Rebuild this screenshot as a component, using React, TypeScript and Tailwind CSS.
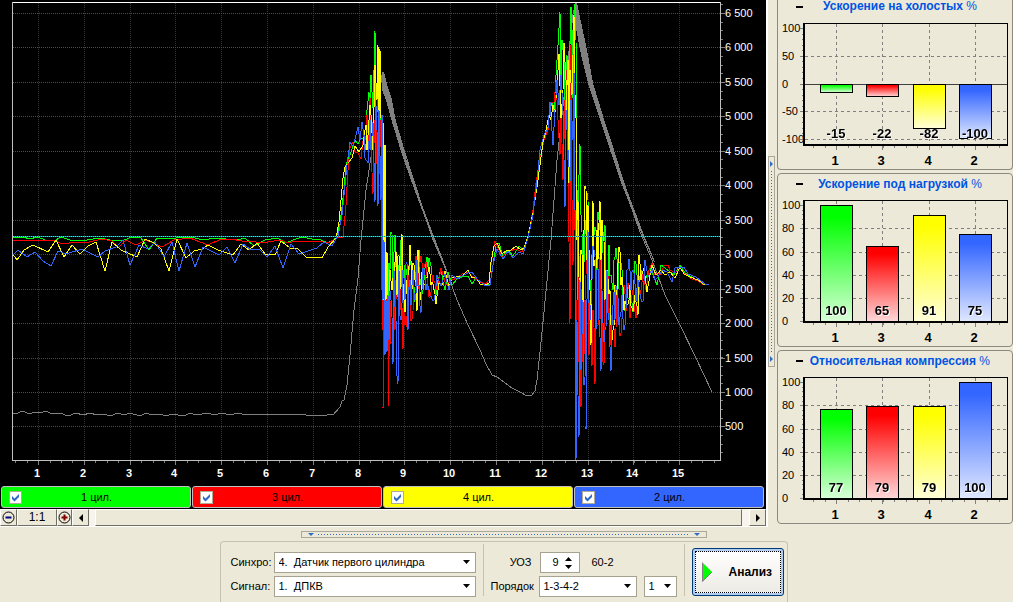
import React, { useState } from 'react';

type Series = { name: string; color: string; points: string };

const BLUE = '#3366ff';

const SERIES: Series[] = [
  {
    name: '1 цил.',
    color: '#00ff00',
    points:
      '12,237 24,237 29,239 38,237 45,240 54,241 61,237 70,240 87,240 99,238 110,240 124,240 132,237 141,238 149,250 157,238 176,238 190,237 204,240 215,238 237,240 245,238 254,246 265,240 277,238 286,243 293,240 302,237 312,239 321,240 328,243 336,238 340,224 344,190 346,165 350,155 355,140 358,144 361,138 364,138 366,150 367,110 369,92 370,140 371,75 373,108 374,70 375,31 376,120 378,100 380,80 381,140 382,160 383,230 384,290 386,300 387,270 388,308 390,270 391,232 393,290 394,252 395,235 397,290 399,265 401,240 403,295 405,265 408,300 411,265 414,302 416,265 419,250 421,285 423,290 426,262 428,267 430,262 433,285 436,295 438,280 441,268 443,282 445,290 448,272 452,285 457,279 462,277 468,276 472,284 476,278 480,282 486,285 490,284 493,265 496,246 499,243 503,256 508,250 513,256 519,246 523,250 528,237 533,213 537,185 540,160 544,138 548,127 550,110 552,102 554,112 556,75 558,45 560,12 561,90 562,40 564,60 565,120 567,55 568,100 570,45 571,7 572,100 573,30 574,180 575,4 576,40 577,190 578,300 580,144 581,215 583,300 585,220 587,193 588,200 590,280 592,255 594,235 597,270 599,220 601,290 603,232 605,225 607,290 609,245 611,275 613,290 615,257 618,290 620,262 622,270 624,305 627,285 630,295 633,312 635,261 638,290 641,270 645,280 650,268 653,275 657,285 661,265 665,268 670,272 674,275 680,265 685,273 692,277 698,281 705,285',
  },
  {
    name: '3 цил.',
    color: '#ff0000',
    points:
      '12,240 33,241 48,240 56,241 62,244 76,242 89,242 102,239 112,241 118,248 126,240 136,245 146,240 153,243 162,247 174,240 190,238 200,242 208,245 219,240 231,239 242,241 256,242 268,242 280,240 288,243 296,241 318,241 328,243 337,238 343,237 346,205 348,170 350,148 353,142 355,152 358,153 361,159 364,132 366,140 367,115 369,150 370,97 371,150 373,194 374,120 376,165 377,110 378,97 379,175 381,120 382,290 383,330 383,408 384,300 386,290 387,350 388,300 388,406 390,300 392,342 394,285 395,330 396,280 398,300 399,270 401,310 403,349 404,290 405,325 407,327 408,265 410,290 412,319 414,270 416,256 418,290 420,262 423,280 426,262 429,297 433,275 437,290 441,268 446,285 452,280 457,278 462,274 468,272 474,278 480,282 486,284 489,280 492,258 495,241 499,250 502,257 509,251 516,249 522,252 528,238 533,210 536,183 540,160 544,140 548,130 550,103 554,102 556,82 557,100 558,120 560,155 561,105 563,180 565,100 567,70 568,160 570,323 571,45 572,200 573,265 574,80 575,230 576,300 578,363 579,255 580,300 581,407 582,290 584,355 585,300 587,240 589,355 590,300 592,366 593,310 595,384 596,300 598,325 600,257 602,320 604,365 605,300 607,275 609,320 611,345 613,320 615,347 617,290 619,320 622,318 624,285 626,312 628,283 630,318 633,290 636,318 638,280 640,295 643,274 646,290 649,270 652,263 655,275 658,273 661,275 664,265 668,265 670,270 675,273 680,268 685,274 692,279 698,281 704,285 709,284',
  },
  {
    name: '4 цил.',
    color: '#ffff00',
    points:
      '12,253 17,260 24,250 33,245 48,252 56,240 64,257 72,245 80,254 88,246 96,242 105,271 112,242 121,250 137,257 145,239 154,243 161,249 169,271 177,239 186,258 194,251 202,249 208,245 218,250 233,255 241,244 249,250 257,243 265,254 275,255 281,241 290,248 298,249 306,257 322,258 328,247 336,238 339,222 343,178 345,167 352,158 355,146 359,152 363,145 365,130 366,125 367,150 370,105 371,115 373,150 375,65 377,100 378,45 379,120 380,49 381,118 382,160 383,123 384,300 385,145 386,300 387,252 389,309 390,270 392,290 394,300 395,262 397,295 399,255 400,290 402,234 404,300 406,280 408,275 410,245 412,290 414,265 415,280 417,311 418,250 420,300 422,272 426,277 429,267 431,285 434,290 436,304 439,283 442,285 445,271 449,287 452,278 456,277 462,276 468,270 472,278 476,277 480,284 486,285 489,283 491,262 494,246 497,243 502,254 507,250 511,250 516,246 521,250 524,248 528,236 533,213 537,187 540,165 543,142 546,130 549,115 551,120 553,105 555,112 558,70 559,54 561,118 563,90 564,43 566,80 566,112 568,60 569,183 570,70 572,95 574,15 575,95 576,118 576,240 578,200 580,340 581,250 583,325 584,230 585,186 587,260 588,205 590,290 591,345 592,280 593,201 595,260 597,230 598,260 600,201 601,260 603,237 605,300 607,270 610,290 613,330 615,285 617,290 619,247 621,285 624,310 627,305 630,285 632,308 635,295 638,315 639,255 641,280 644,268 647,292 650,275 652,265 656,275 661,270 665,275 670,272 675,278 680,267 684,274 690,277 698,280 705,285',
  },
  {
    name: '2 цил.',
    color: BLUE,
    points:
      '12,256 18,250 27,257 35,252 43,261 51,266 58,251 66,254 82,249 98,257 105,251 116,247 123,240 130,265 139,245 148,249 155,242 164,257 172,242 179,271 187,243 195,267 203,247 219,255 227,247 235,263 243,244 251,250 259,249 267,257 275,246 283,268 291,244 299,254 317,248 324,242 332,246 338,236 342,215 345,185 347,165 350,142 353,146 356,135 358,127 360,140 362,122 364,135 365,158 368,163 370,120 371,150 373,122 375,202 376,106 377,130 378,206 379,110 381,200 382,115 383,300 384,240 385,355 386,300 387,352 388,295 389,340 391,300 393,364 394,270 396,320 398,384 399,270 401,320 403,270 405,300 407,262 408,330 410,280 411,305 413,270 415,300 417,260 419,285 421,313 423,268 426,290 430,296 434,300 437,275 441,286 445,274 449,290 452,275 457,279 462,276 468,273 472,272 477,279 482,283 486,286 490,285 493,265 497,249 500,254 503,259 508,251 513,258 519,252 523,254 528,238 533,215 537,180 540,150 544,135 548,128 550,102 553,145 555,110 557,80 559,105 561,75 563,110 565,207 566,110 568,150 570,183 571,100 573,140 574,73 575,210 576,460 577,320 578,395 579,437 580,280 581,370 583,300 584,385 586,300 586,429 587,300 588,230 590,320 592,280 594,250 596,330 597,270 599,320 601,371 602,290 605,330 607,270 609,320 611,371 613,305 615,320 617,290 619,325 622,295 625,325 627,270 629,259 631,290 633,270 636,301 638,280 641,299 643,301 645,260 648,277 652,269 655,280 658,277 662,270 667,272 672,282 675,268 680,267 684,267 688,274 696,277 701,281 705,284 709,284',
  },
];

const DENSE_ZONES = [
  { from: 385, to: 440, amp: 34 },
  { from: 577, to: 645, amp: 48 },
];

/* Adds the fast ripple that follows each throttle release, fading towards the end of the zone. */
function withRipple(points: string, seed: number): string {
  const pts = points.split(' ').map((p) => p.split(',').map(Number));
  const out: string[] = [];
  pts.forEach(([x, y], i) => {
    out.push(`${x},${y}`);
    const next = pts[i + 1];
    const zone = DENSE_ZONES.find((z) => x >= z.from && x < z.to);
    if (!next || !zone) return;
    for (let xi = x + 1; xi < next[0]; xi += 1) {
      const fade = 1 - (xi - zone.from) / (zone.to - zone.from);
      const base = y + ((next[1] - y) * (xi - x)) / (next[0] - x);
      out.push(`${xi},${Math.round(base + Math.sin(xi * 12.9 + seed * 2.3) * zone.amp * fade)}`);
    }
  });
  return out.join(' ');
}

const TRACES = SERIES.map((s, i) => ({ ...s, points: withRipple(s.points, i) }));

const RPM_LINE =
  '12,413 18,413 22,411 30,414 34,412 40,413 46,411 52,414 60,413 68,416 76,413 83,415 90,413 97,415 104,414 110,416 118,413 124,415 130,413 140,416 146,413 152,415 160,414 166,416 172,414 184,416 190,413 196,415 208,413 214,415 222,413 230,415 238,413 246,415 262,414 276,415 290,414 306,415 320,415 327,415 330,414 333,415 340,407 342,401 344,400 347,385 350,355 354,310 358,278 361,240 366,190 372,150 376,120 379,95 382,75 404,150 432,237 446,270 457,300 468,325 480,350 486,364 492,375 497,377 504,382 512,388 520,392 527,396 532,395 535,391 537,380 540,352 544,312 551,240 557,160 562,115 568,60 573,14 576,3 591,84 611,150 640,232 652,260 665,295 680,325 696,358 712,392';

const X_GRID = [38, 84, 130, 175, 221, 267, 313, 359, 404, 450, 496, 542, 588, 633, 679];
const Y_GRID = [13, 47, 82, 116, 151, 185, 220, 254, 289, 323, 358, 392, 426];
const Y_LABELS = ['6 500', '6 000', '5 500', '5 000', '4 500', '4 000', '3 500', '3 000', '2 500', '2 000', '1 500', '1 000', '500'];
const X_MINOR = Array.from({ length: 62 }, (_, i) => Math.round(15.2 + i * 11.45)).filter((x) => x < 720);
const Y_MINOR = Array.from({ length: 53 }, (_, i) => Math.round(4.4 + i * 8.61)).filter((y) => y < 460);
const LEVEL_DOTS = Array.from({ length: 354 }, (_, i) => `M${13 + i * 2} 236h1v1h-1z`).join('');

function Oscillogram({ visible }: { visible: Record<string, boolean> }) {
  return (
    <svg viewBox="0 0 766 485" className="block h-auto w-full" role="img" aria-label="График оборотов">
      <g shapeRendering="crispEdges" fill="none" strokeWidth="1">
        {X_GRID.map((x) => (
          <line key={x} x1={x + 0.5} x2={x + 0.5} y1="3" y2="460" stroke="#343434" strokeDasharray="1 1" />
        ))}
        {Y_GRID.map((y) => (
          <line key={y} x1="13" x2="720" y1={y + 0.5} y2={y + 0.5} stroke="#4c4c4c" strokeDasharray="1 1" />
        ))}
        <polyline points={RPM_LINE} stroke="#808080" />
        <polygon points="382,72 384,72 387,84 392,100 396,122 406,158 418,194 433,234 447,270 446,270 431,234 416,194 403,158 392,122 386,100 382,90" fill="#808080" />
        <polygon points="575,3 577,3 581,22 587,50 593,83 603,116 614,150 625,185 642,230 655,262 654,262 640,230 622,185 610,150 599,116 588,83 581,55 576,28" fill="#808080" />
        {TRACES.filter((s) => visible[s.name]).map((s) => (
          <polyline key={s.name} points={s.points} stroke={s.color} />
        ))}
        <path d="M13 236h707v1h-707z" fill="#008080" />
        <path d={LEVEL_DOTS} fill="#00ffff" />
        <line x1="12" x2="721" y1="2.5" y2="2.5" stroke="#ffffff" />
        <line x1="12.5" x2="12.5" y1="2" y2="461" stroke="#c0c0c0" />
        <line x1="12" x2="721" y1="460.5" y2="460.5" stroke="#c0c0c0" />
        <line x1="720.5" x2="720.5" y1="2" y2="461" stroke="#c0c0c0" />
        {X_MINOR.map((x) => (
          <line key={x} x1={x + 0.5} x2={x + 0.5} y1="461" y2="463" stroke="#808080" />
        ))}
        {X_GRID.map((x) => (
          <line key={x} x1={x + 0.5} x2={x + 0.5} y1="461" y2="465" stroke="#808080" />
        ))}
        {Y_MINOR.map((y) => (
          <line key={y} x1="721" x2="723" y1={y + 0.5} y2={y + 0.5} stroke="#808080" />
        ))}
        {Y_GRID.map((y) => (
          <line key={y} x1="721" x2="725" y1={y + 0.5} y2={y + 0.5} stroke="#808080" />
        ))}
      </g>
      <g fill="#ffffff" fontSize="11">
        {Y_GRID.map((y, i) => (
          <text key={y} x="725" y={y + 4}>
            {Y_LABELS[i]}
          </text>
        ))}
      </g>
      <g fill="#ffffff" fontSize="11" fontWeight="bold" textAnchor="middle">
        {X_GRID.map((x, i) => (
          <text key={x} x={x - 1} y="477">
            {i + 1}
          </text>
        ))}
      </g>
    </svg>
  );
}

const CHANNELS = [
  { name: '1 цил.', cls: 'bg-[#00ff00]' },
  { name: '3 цил.', cls: 'bg-[#ff0000]' },
  { name: '4 цил.', cls: 'bg-[#ffff00]' },
  { name: '2 цил.', cls: 'bg-[#3366ff]' },
];

function ChannelBar({ visible, onToggle }: { visible: Record<string, boolean>; onToggle: (name: string) => void }) {
  return (
    <div className="grid h-6 grid-cols-4 gap-px py-px pr-0.5 pl-px">
      {CHANNELS.map((c) => (
        <label key={c.name} className={`flex items-center rounded-[3px] border border-[#c0c0c0] px-[7px] ${c.cls}`}>
          <span className="relative block size-[13px] bg-white">
            <input
              type="checkbox"
              checked={visible[c.name]}
              onChange={() => onToggle(c.name)}
              className="peer block size-[13px] appearance-none border border-[#b0ac98]"
            />
            <svg viewBox="0 0 13 13" className="pointer-events-none absolute inset-0 hidden size-[13px] peer-checked:block">
              <path d="M3 5v3l2.500 2.500L10 6V3L5.500 7.500z" fill="#316ac5" />
            </svg>
          </span>
          <span className="flex-1 pr-3 text-center">{c.name}</span>
        </label>
      ))}
    </div>
  );
}

const RAISED = 'flex h-[17px] items-center justify-center border-t border-l border-r border-b border-t-white border-l-white border-r-[#716f64] border-b-[#716f64] bg-[#ece9d8]';

function ScrollRow() {
  return (
    <div className="flex h-[18px] border-b border-white bg-[#f6f4ec]">
      <button type="button" aria-label="Уменьшить" className={`${RAISED} w-[17px]`}>
        <svg viewBox="0 0 13 13" className="size-[13px]">
          <circle cx="6.500" cy="6.500" r="5.500" fill="none" stroke="#000" />
          <path d="M3.500 5.500h6v2h-6z" fill="#000080" />
        </svg>
      </button>
      <button type="button" className={`${RAISED} w-10 text-[12px]`}>
        1:1
      </button>
      <button type="button" aria-label="Увеличить" className={`${RAISED} w-[15px]`}>
        <svg viewBox="0 0 13 13" className="size-[13px] shrink-0">
          <circle cx="6.500" cy="6.500" r="5.500" fill="none" stroke="#000" />
          <path d="M3.500 5.500h2v-2h2v2h2v2h-2v2h-2v-2h-2z" fill="#800000" />
        </svg>
      </button>
      <button type="button" aria-label="Влево" className={`${RAISED} w-[17px]`}>
        <svg viewBox="0 0 4 8" className="h-2 w-1">
          <path d="M4 0v8L0 4z" fill="#000" />
        </svg>
      </button>
      <div className="flex flex-1 pr-[7px] pl-1.5">
        <div className={`${RAISED} flex-1`} />
      </div>
      <button type="button" aria-label="Вправо" className={`${RAISED} w-[17px]`}>
        <svg viewBox="0 0 4 8" className="h-2 w-1">
          <path d="M0 0v8l4-4z" fill="#000" />
        </svg>
      </button>
    </div>
  );
}

type Bar = { label: string; value: number; top: string; bottom: string };

const BAR_STYLE = [
  { label: '1', top: '#00ff00', bottom: '#d8ffd8' },
  { label: '3', top: '#ff0000', bottom: '#ffd8d8' },
  { label: '4', top: '#ffff00', bottom: '#ffffd8' },
  { label: '2', top: '#3366ff', bottom: '#e0e8ff' },
];
const CENTERS = [58, 104, 151, 197];

function BarPanel({ id, title, values, ticks, zero, scale, minor, first }: {
  id: string;
  title: string;
  values: number[];
  ticks: [number, number][];
  zero: number;
  scale: number;
  minor: number;
  first?: boolean;
}) {
  const bars: Bar[] = BAR_STYLE.map((b, i) => ({ ...b, value: values[i] }));
  const minorTicks = Array.from({ length: 60 }, (_, i) => Math.round(11 + i * minor)).filter((y) => y < 128);
  return (
    <section
      className={`border border-[#8c8a80] bg-[#ece9d8] ${first ? 'rounded-b-[4px] border-t-0' : 'rounded-[4px]'}`}
    >
      <header className={`flex items-center text-[12px] leading-[13px] font-bold ${first ? 'h-[17px] pb-1' : 'h-5'}`}>
        <button type="button" aria-label="Свернуть" className="flex h-3 w-8 items-center justify-end pr-[7px]">
          <span className="h-[2px] w-[7px] bg-black" />
        </button>
        <h2 className="flex-1 pr-[22px] text-center whitespace-nowrap text-[#0054e3]">
          {title} <span className="font-normal">%</span>
        </h2>
      </header>
      <svg viewBox="0 0 234 152" className="block h-auto w-full" role="img" aria-label={title}>
        <defs>
          {bars.map((b) => (
            <linearGradient key={b.label} id={`${id}-${b.label}`} x1="0" x2="0" y1="0" y2="1">
              <stop offset="0" stopColor={b.top} />
              <stop offset="0.100" stopColor={b.top} />
              <stop offset="1" stopColor={b.bottom} />
            </linearGradient>
          ))}
        </defs>
        <g fontSize="11" fill="#000">
          {ticks.map(([v, y]) => (
            <text key={v} x="4" y={y + 4}>
              {v}
            </text>
          ))}
        </g>
        <g shapeRendering="crispEdges" fill="none">
          {ticks.map(([v, y]) => (
            <React.Fragment key={v}>
              <line x1="22" x2="26" y1={y + 0.5} y2={y + 0.5} stroke="#808080" />
              {v !== 0 && v !== 100 && (
                <line x1="27" x2="229" y1={y + 0.5} y2={y + 0.5} stroke="#808080" strokeDasharray="3 3" />
              )}
            </React.Fragment>
          ))}
          {minorTicks.map((y) => (
            <line key={y} x1="24" x2="26" y1={y + 0.5} y2={y + 0.5} stroke="#808080" />
          ))}
          {CENTERS.map((x) => (
            <line key={x} x1={x + 0.5} x2={x + 0.5} y1="7" y2="128" stroke="#808080" strokeDasharray="3 3" />
          ))}
          {Array.from({ length: 17 }, (_, i) => Math.round(35 + i * 11.6)).map((x) => (
            <line key={x} x1={x + 0.5} x2={x + 0.5} y1="129" y2="131" stroke="#808080" />
          ))}
          {CENTERS.map((x) => (
            <line key={x} x1={x + 0.5} x2={x + 0.5} y1="129" y2="133" stroke="#808080" />
          ))}
          <line x1="27" x2="229" y1={zero + 0.5} y2={zero + 0.5} stroke="#404040" />
          {bars.map((b, i) => {
            const edge = Math.round(zero - b.value * scale);
            return (
              <rect
                key={b.label}
                x={CENTERS[i] - 15.5}
                y={Math.min(edge, zero) + 0.5}
                width="32"
                height={Math.abs(edge - zero)}
                fill={`url(#${id}-${b.label})`}
                stroke="#000"
              />
            );
          })}
          <path d="M26 6.500h204M229.500 6v122" stroke="#000" />
          <path d="M26 6v122M25 128h205" stroke="#000" strokeWidth="2" />
        </g>
        <g fontSize="13" fontWeight="bold" textAnchor="middle" fill="#000">
          {bars.map((b, i) => (
            <text key={b.label} x={CENTERS[i]} y="121" className="drop-shadow-[1px_1px_0_#ffffff]">
              {b.value}
            </text>
          ))}
          {bars.map((b, i) => (
            <text key={b.label} x={CENTERS[i] - 1} y="148">
              {b.label}
            </text>
          ))}
        </g>
      </svg>
    </section>
  );
}

const PERCENT_TICKS: [number, number][] = [[100, 11], [80, 34], [60, 58], [40, 81], [20, 104], [0, 127]];
const SIGNED_TICKS: [number, number][] = [[100, 11], [50, 39], [0, 67], [-50, 94], [-100, 122]];

function Picker({ label, options, className }: { label: string; options: string[]; className: string }) {
  return (
    <span className={`relative block ${className}`}>
      <select
        aria-label={label}
        className="block h-[21px] w-full appearance-none border border-[#a5a290] bg-white pl-1 text-[11px] outline-none"
      >
        {options.map((o) => (
          <option key={o}>{o}</option>
        ))}
      </select>
      <svg viewBox="0 0 7 4" className="pointer-events-none absolute top-2 right-1.5 h-1 w-[7px]">
        <path d="M0 0h7L3.500 4z" fill="#000" />
      </svg>
    </span>
  );
}

function Toolbar() {
  const [angle, setAngle] = useState(9);
  return (
    <form
      className="mx-auto flex w-[568px] flex-1 gap-[7px] rounded-t-[4px] border border-b-0 border-[#c5c2b0] pt-0.5 pl-2.5"
      onSubmit={(e) => e.preventDefault()}
    >
      <div className="grid grid-cols-[43px_202px] content-start items-center gap-y-[3px] pt-2">
        <span>Синхро:</span>
        <Picker label="Синхро" options={['4.\u00a0\u00a0Датчик первого цилиндра']} className="w-full" />
        <span>Сигнал:</span>
        <Picker label="Сигнал" options={['1.\u00a0\u00a0ДПКВ']} className="w-full" />
      </div>
      <div className="h-[52px] w-px bg-[#c5c2b0]" />
      <div className="flex flex-col gap-[3px] pt-2">
        <div className="flex h-[21px] items-center">
          <label htmlFor="angle" className="w-[41px] text-right">
            УОЗ
          </label>
          <span className="ml-2 flex h-[21px] w-10 items-center border border-[#a5a290] bg-white">
            <input
              id="angle"
              value={angle}
              onChange={(e) => setAngle(Number(e.target.value) || 0)}
              className="w-[18px] text-right outline-none"
            />
            <span className="flex flex-1 flex-col items-center gap-1">
              <button type="button" aria-label="Больше" onClick={() => setAngle(angle + 1)}>
                <svg viewBox="0 0 7 4" className="block h-1 w-[7px]">
                  <path d="M0 4h7L3.500 0z" fill="#000" />
                </svg>
              </button>
              <button type="button" aria-label="Меньше" onClick={() => setAngle(angle - 1)}>
                <svg viewBox="0 0 7 4" className="block h-1 w-[7px]">
                  <path d="M0 0h7L3.500 4z" fill="#000" />
                </svg>
              </button>
            </span>
          </span>
          <span className="pl-3">60-2</span>
        </div>
        <div className="flex h-[21px] items-center">
          <span className="w-[41px] text-right">Порядок</span>
          <Picker label="Порядок" options={['1-3-4-2']} className="ml-[7px] w-[98px]" />
          <Picker label="Номер" options={['1']} className="ml-[7px] w-[33px]" />
        </div>
      </div>
      <div className="h-[52px] w-px bg-[#c5c2b0]" />
      <div className="pt-1">
        <button
          type="submit"
          className="h-12 w-[92px] rounded-[3px] border border-[#003c74] bg-[#b4cdf2] p-0.5 text-[12px] font-bold"
        >
          <span className="flex h-full items-center gap-4 border border-dotted border-black bg-linear-to-b from-white to-[#ecebe4] pl-1.5">
            <svg viewBox="0 0 11 20" className="h-5 w-[11px]">
              <path d="M1 1l9 9-9 9z" fill="#00ff00" />
              <path d="M0.500 0.500v19L10 10" fill="none" stroke="#808080" />
            </svg>
            Анализ
          </span>
        </button>
      </div>
    </form>
  );
}

export default function App() {
  const [visible, setVisible] = useState<Record<string, boolean>>({
    '1 цил.': true,
    '2 цил.': true,
    '3 цил.': true,
    '4 цил.': true,
  });
  const toggle = (name: string) => setVisible((v) => ({ ...v, [name]: !v[name] }));

  return (
    <div className="flex min-h-screen flex-col bg-[#ece9d8] font-['Liberation_Sans',Arial,sans-serif] text-[11px] leading-[13px] text-black">
      <main className="flex">
        <div className="min-w-0 flex-1 border-r-2 border-white">
          <div className="bg-black">
            <Oscillogram visible={visible} />
            <ChannelBar visible={visible} onToggle={toggle} />
          </div>
          <ScrollRow />
        </div>
        <div className="flex w-[9px] items-center pb-1">
          <div className="flex h-[211px] w-[7px] flex-col items-center justify-between border border-[#aca899] py-1">
            <svg viewBox="0 0 3 6" className="h-1.5 w-[3px]">
              <path d="M0 0v6l3-3z" fill="#316ac5" />
            </svg>
            <div className="my-1 w-px flex-1 bg-[repeating-linear-gradient(to_bottom,#316ac5_0_1px,transparent_1px_3px)]" />
            <svg viewBox="0 0 3 6" className="h-1.5 w-[3px]">
              <path d="M0 0v6l3-3z" fill="#316ac5" />
            </svg>
          </div>
        </div>
        <aside className="flex w-[236px] flex-col gap-[3px]">
          <BarPanel id="idle" title="Ускорение на холостых" values={[-15, -22, -82, -100]} ticks={SIGNED_TICKS} zero={67} scale={0.54} minor={5.55} first />
          <BarPanel id="load" title="Ускорение под нагрузкой" values={[100, 65, 91, 75]} ticks={PERCENT_TICKS} zero={127} scale={1.16} minor={4.65} />
          <BarPanel id="comp" title="Относительная компрессия" values={[77, 79, 79, 100]} ticks={PERCENT_TICKS} zero={127} scale={1.16} minor={4.65} />
        </aside>
      </main>
      <footer className="flex flex-1 flex-col pr-1.5">
        <div className="flex h-[14px] justify-center">
          <div className="mt-1 flex h-[7px] w-[406px] items-center justify-between border border-[#aca899] px-1.5">
            <svg viewBox="0 0 6 3" className="h-[3px] w-1.5">
              <path d="M0 0h6L3 3z" fill="#316ac5" />
            </svg>
            <div className="mx-1 h-px flex-1 bg-[repeating-linear-gradient(to_right,#316ac5_0_1px,transparent_1px_3px)]" />
            <svg viewBox="0 0 6 3" className="h-[3px] w-1.5">
              <path d="M0 0h6L3 3z" fill="#316ac5" />
            </svg>
          </div>
        </div>
        <Toolbar />
      </footer>
    </div>
  );
}
